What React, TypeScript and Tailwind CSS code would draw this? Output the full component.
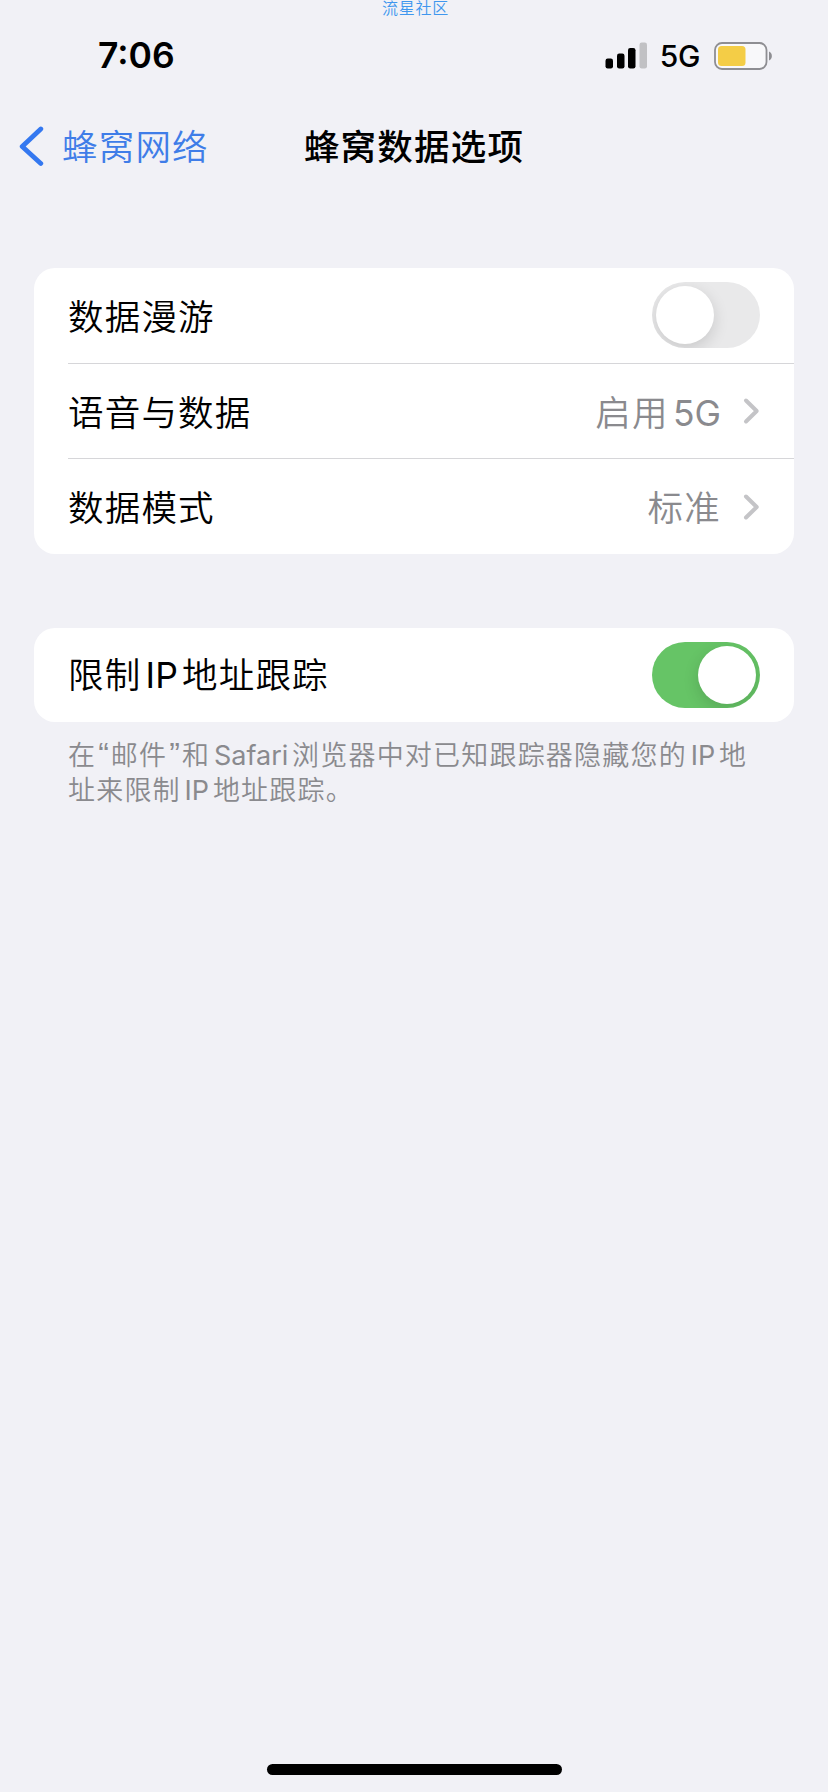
import type { ReactNode } from "react";

function StatusBar() {
  return (
    <div className="flex h-[62px] items-end justify-between pr-[54px] pb-[1px] pl-[98px]">
      <span className="text-[35.5px] leading-[42px] font-semibold">7:06</span>
      <div className="flex h-[42px] items-center pb-[1px]">
        <svg width="43" height="27" viewBox="0 0 43 27">
          <rect x="0.5" y="16.5" width="7.5" height="10" rx="2.2" fill="#000" />
          <rect x="12" y="11.5" width="7.5" height="15" rx="2.2" fill="#000" />
          <rect x="23" y="6" width="7.5" height="20.5" rx="2.2" fill="#000" />
          <rect x="34.5" y="0.5" width="7.5" height="26" rx="2.2" fill="#c1c1c4" />
        </svg>
        <span className="ml-[12px] pt-[1px] text-[30px] leading-[42px] font-medium tracking-[-0.4px]">5G</span>
        <svg width="60" height="28" viewBox="0 0 60 28" className="ml-[14px]">
          <rect x="1" y="1" width="51.5" height="26" rx="7" fill="#f8f8fa" stroke="#8e8e92" strokeWidth="1.8" />
          <rect x="4" y="4" width="27.5" height="20" rx="3.5" fill="#f4cd46" />
          <path d="M55 9.5c3.8 1.2 3.8 7.8 0 9z" fill="#8e8e92" />
        </svg>
      </div>
    </div>
  );
}

function NavBar() {
  return (
    <div className="grid h-[138px] grid-cols-[1fr_auto_1fr] items-center">
      <div className="flex items-center pl-[18px] text-[#3f7de8]">
        <svg width="26" height="42" viewBox="0 0 26 42" fill="none">
          <path
            d="M22.8 3 L4.2 20.5 L22.8 37.5"
            stroke="#3478f0"
            strokeWidth="4.8"
            strokeLinecap="round"
            strokeLinejoin="round"
          />
        </svg>
        <span className="ml-[18px] pt-[2px] text-[35.5px] font-[350] tracking-[1.2px]">蜂窝网络</span>
      </div>
      <h1 className="pt-[2px] text-[35.5px] font-medium tracking-[1.2px]">蜂窝数据选项</h1>
    </div>
  );
}

function Toggle({ on }: { on?: boolean }) {
  return (
    <div
      className={`flex h-[66px] w-[108px] items-center overflow-hidden rounded-full px-[4px] ${
        on ? "justify-end bg-[#66c466]" : "bg-[#e9e9ea]"
      }`}
    >
      <div className="size-[58px] rounded-full bg-white shadow-[0_5px_16px_rgba(0,0,0,0.14)]" />
    </div>
  );
}

function Chevron() {
  return (
    <svg width="17" height="28" viewBox="0 0 17 28" fill="none" className="ml-[22px]">
      <path
        d="M3 3.5 L13.7 14 L3 24.5"
        stroke="#c4c4c7"
        strokeWidth="4"
        strokeLinecap="round"
        strokeLinejoin="round"
      />
    </svg>
  );
}

function Latin({ children }: { children: ReactNode }) {
  return <span className="font-normal tracking-normal">{children}</span>;
}

function Quote({ children }: { children: ReactNode }) {
  return (
    <span className="mr-[2px] ml-[2px] font-['Liberation_Sans',sans-serif] text-[32px] leading-none tracking-normal">
      {children}
    </span>
  );
}

function Row({ label, children }: { label: ReactNode; children: ReactNode }) {
  return (
    <div className="flex flex-1 items-center justify-between pr-[34px]">
      <span className="pt-[5px] text-[35.5px] font-[350] tracking-[1.2px] [word-spacing:-7px]">{label}</span>
      <div className="flex items-center text-[#8a8a8e]">{children}</div>
    </div>
  );
}

function Value({ children }: { children: ReactNode }) {
  return (
    <>
      <span className="pt-[5px] text-[35.5px] font-[350] tracking-[1.2px] [word-spacing:-7px]">{children}</span>
      <Chevron />
    </>
  );
}

export default function App() {
  return (
    <div className="flex h-[1792px] w-[828px] flex-col bg-[#f1f1f6] font-['Inter','Noto_Sans_CJK_SC',sans-serif] leading-none text-black">
      <div className="flex h-[16px] justify-center pl-[3px] text-[16px] leading-[15px] tracking-[0.7px] text-[#3f97ee]">
        <span className="font-['Noto_Sans_CJK_SC',sans-serif] font-[350]">流星社区</span>
      </div>
      <StatusBar />
      <NavBar />

      <section className="mx-[34px] mt-[52px] flex h-[286px] flex-col divide-y divide-[#d6d6d9] rounded-[21px] bg-white pl-[34px]">
        <Row label="数据漫游">
          <Toggle />
        </Row>
        <Row label="语音与数据">
          <Value>
            启用 <Latin>5G</Latin>
          </Value>
        </Row>
        <Row label="数据模式">
          <Value>标准</Value>
        </Row>
      </section>

      <section className="mx-[34px] mt-[74px] flex h-[94px] rounded-[21px] bg-white pl-[34px]">
        <Row
          label={
            <span className="block pb-[3px]">
              限制 <Latin>IP</Latin> 地址跟踪
            </span>
          }
        >
          <Toggle on />
        </Row>
      </section>
      <p className="mx-[68px] mt-[16px] text-[27px] leading-[34.5px] font-[350] tracking-[1.2px] whitespace-nowrap text-[#8a8a8e] [word-spacing:-5px]">
        在<Quote>“</Quote>邮件<Quote>”</Quote>和 <Latin>Safari</Latin> 浏览器中对已知跟踪器隐藏您的 <Latin>IP</Latin> 地
        <br />
        址来限制 <Latin>IP</Latin> 地址跟踪。
      </p>

      <div className="mx-auto mt-auto mb-[17px] h-[11px] w-[295px] rounded-full bg-black" />
    </div>
  );
}
